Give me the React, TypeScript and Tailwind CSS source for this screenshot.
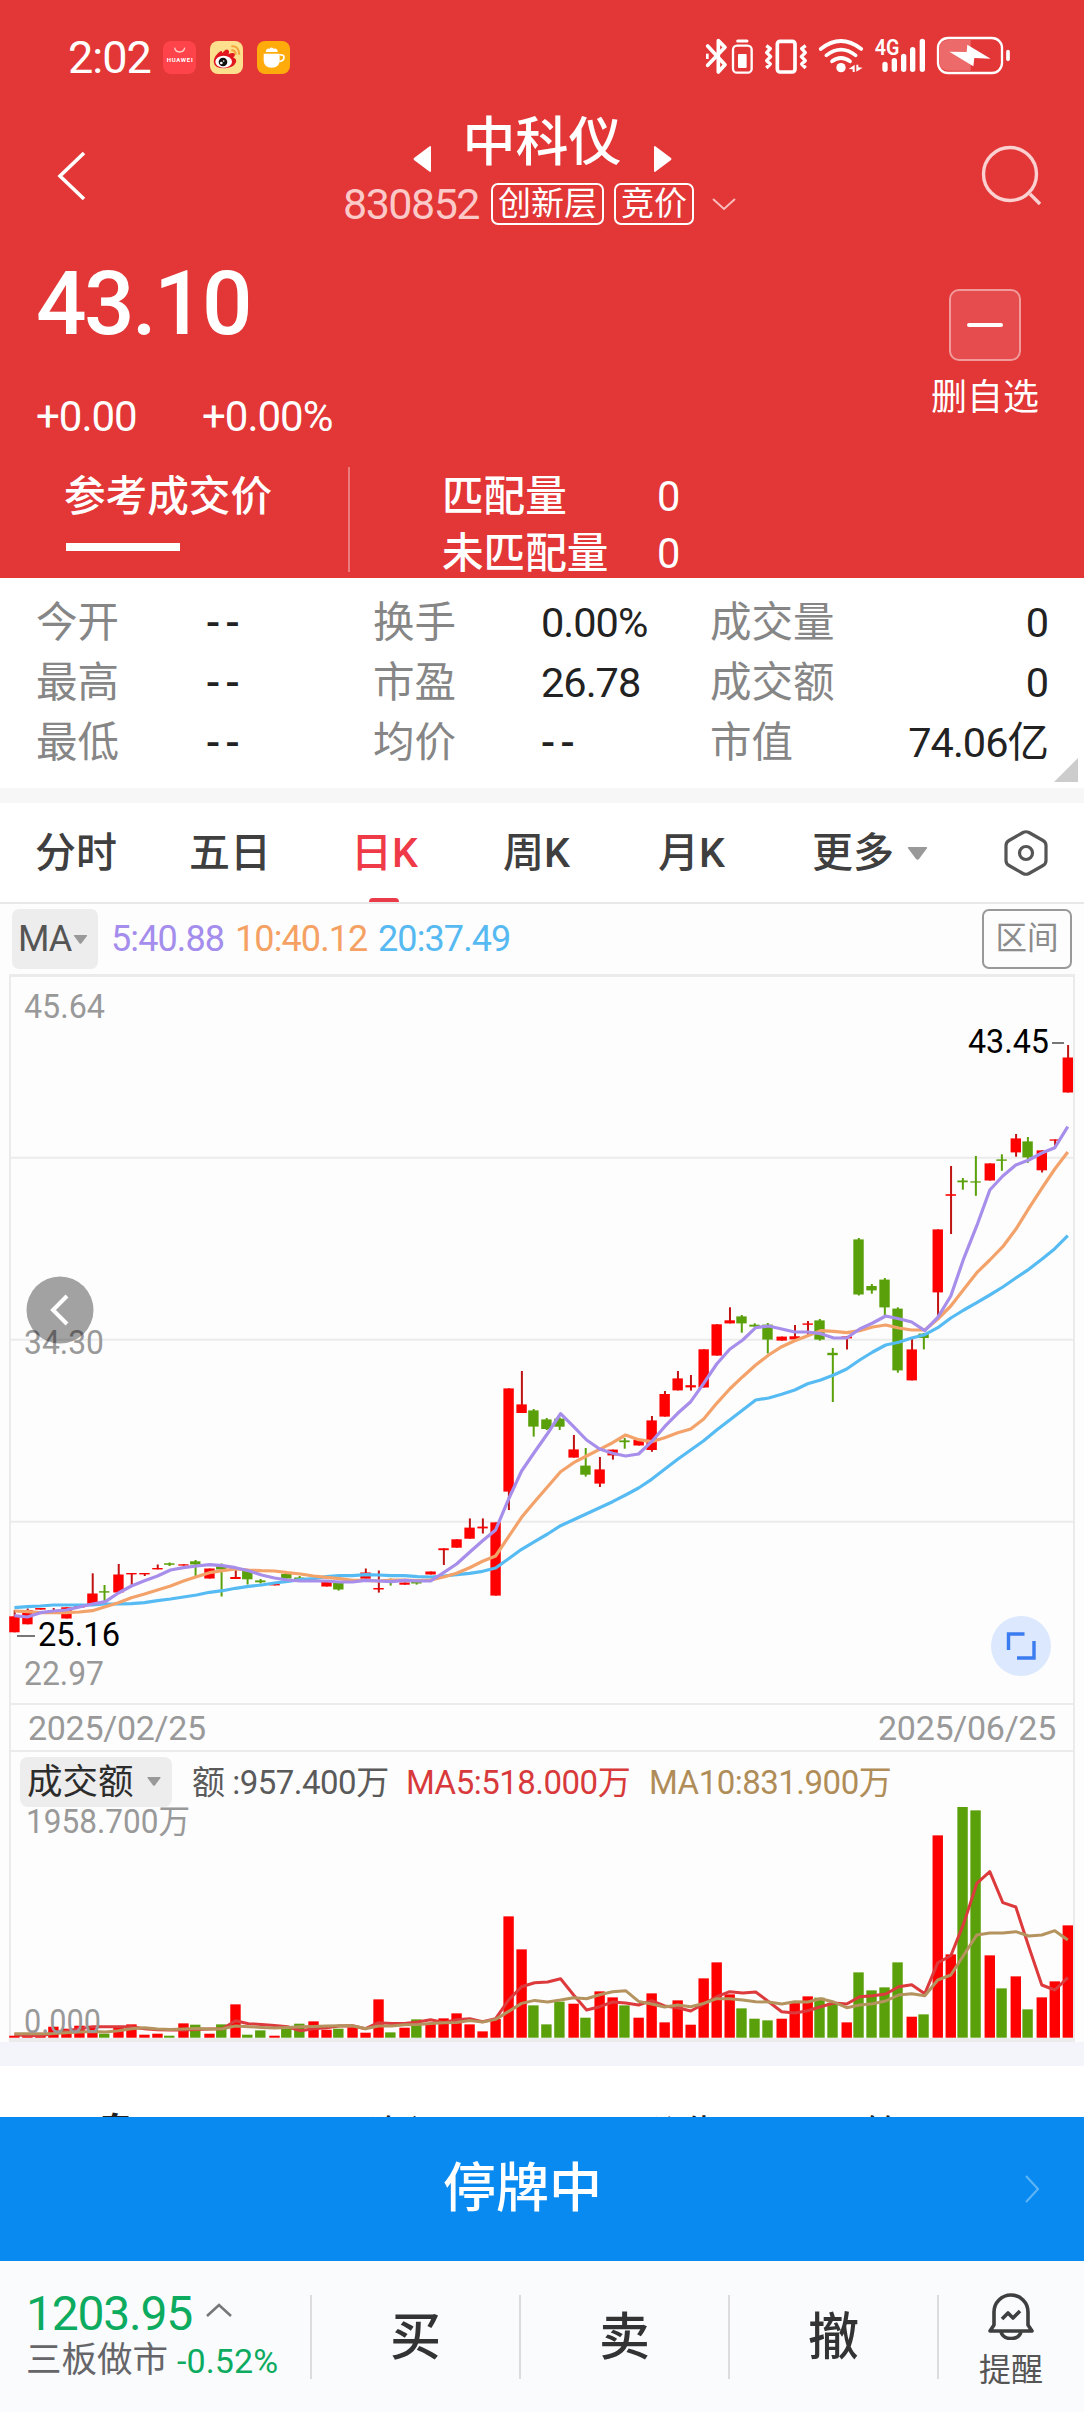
import type { ReactNode } from 'react'

type Candle = [color: 'r' | 'g', top: number, bottom: number, high?: number, low?: number]

const STEP = 13.005
const FIRST_X = 14.4
const BASE_Y = 2037.7

const RED = '#fe0000'
const GREEN = '#5aa00a'

// body top, body bottom, wick high, wick low
const candles: Candle[] = [
  ['r', 1616.3, 1632.3, 1610], ['r', 1610, 1624.3, 1608.5], ['r', 1608, 1609.6], ['r', 1610, 1611.5, 1608],
  ['r', 1607.3, 1618.5], ['r', 1606, 1607.5], ['r', 1593.5, 1604, 1573.3], ['g', 1591.2, 1592.6, 1585, 1601],
  ['r', 1574.5, 1592.5, 1564], ['r', 1573, 1574.4, 1573, 1586], ['r', 1573, 1574.4, 1573, 1576],
  ['r', 1568, 1569.4, 1564.5], ['g', 1563.3, 1564.8, 1562.5, 1566], ['r', 1564.3, 1565.6],
  ['g', 1561.3, 1564.5, 1560, 1576], ['r', 1568.5, 1578.5], ['g', 1565.5, 1569.5, 1563.5, 1596.5],
  ['r', 1577, 1579, 1570], ['g', 1570.5, 1579.3, 1570, 1584.5], ['g', 1580.4, 1582.3, 1579, 1583.5],
  ['r', 1583.3, 1585.4], ['g', 1574, 1578.5], ['g', 1577.5, 1579, 1576], ['r', 1580, 1581.6],
  ['r', 1581.5, 1586.5], ['g', 1582, 1589.5, 1581, 1590.6], ['r', 1581, 1582.5], ['r', 1572.5, 1578.7, 1568.5],
  ['r', 1588, 1589.5, 1570.5, 1592.6], ['g', 1581.3, 1582.7, 1578.5, 1585.6], ['r', 1582.5, 1584.7],
  ['g', 1582, 1583.5, 1581, 1584.6], ['r', 1571.5, 1574.5], ['r', 1548.3, 1550.2, 1548.3, 1565],
  ['r', 1539.3, 1547.7], ['r', 1527.6, 1538.7, 1518.4], ['r', 1526.6, 1528.4, 1518.4, 1533.5],
  ['r', 1522.4, 1595.6], ['r', 1388.4, 1491.6, 1388.4, 1510], ['r', 1404.4, 1413, 1371],
  ['g', 1410.4, 1426.6, 1409, 1436.6], ['g', 1419.4, 1429, 1418, 1430], ['g', 1418.6, 1426.7, 1417.5, 1430],
  ['r', 1449.4, 1457.6, 1435], ['g', 1465.6, 1474.7, 1448, 1476.6], ['r', 1469.4, 1483.6, 1457, 1487],
  ['r', 1449.6, 1455.4, 1449.6, 1459.6], ['g', 1440.4, 1442.2, 1438, 1448.7], ['r', 1439.6, 1445.5],
  ['r', 1420.4, 1450, 1416, 1451.8], ['r', 1394, 1416.6, 1391], ['r', 1378.4, 1390.4, 1371],
  ['r', 1385.2, 1387.4, 1375, 1390.6], ['r', 1349.3, 1387.5], ['r', 1324.3, 1355.6], ['r', 1320.3, 1323.4, 1307.3],
  ['g', 1316.4, 1323.4, 1315, 1332.7], ['g', 1324.7, 1326.6, 1323.3, 1327.5], ['g', 1324.6, 1339.6, 1323, 1353.5],
  ['r', 1336.6, 1340.6], ['r', 1336.3, 1339.4, 1325], ['r', 1323.4, 1324.8, 1321, 1335],
  ['g', 1320.4, 1339.6, 1319, 1340.7], ['g', 1352.8, 1355.2, 1348, 1402], ['r', 1336.4, 1338.4, 1336, 1349.5],
  ['g', 1239.4, 1294.5, 1238, 1295.5], ['g', 1286, 1290.4, 1284, 1293.7], ['g', 1279.6, 1307.4, 1278, 1315],
  ['g', 1308.6, 1370.4, 1307.3, 1372.7], ['r', 1349.4, 1380.4, 1338.7], ['g', 1333.6, 1338, 1333, 1349.4],
  ['r', 1229.4, 1292.4, 1229.4, 1318], ['r', 1194.2, 1195.8, 1166, 1234], ['g', 1180.5, 1182.3, 1178, 1189.7],
  ['g', 1181.3, 1182.6, 1156, 1195.8], ['r', 1163.4, 1180.5], ['g', 1159.4, 1160.8, 1154.3, 1170.8],
  ['r', 1138.4, 1152.4, 1134, 1156.7], ['g', 1141.4, 1157.4, 1137, 1162.8], ['r', 1150.4, 1170.3, 1150.4, 1172.5],
  ['r', 1139.4, 1140.7, 1139.4, 1146], ['r', 1057.5, 1092.5, 1045],
]

const ma5 = [
  1615.7, 1617, 1612.7, 1611, 1610, 1607, 1604, 1601.7, 1593, 1586, 1580.7, 1576, 1570, 1567.7, 1566, 1564.7, 1565.7,
  1567.7, 1570.7, 1575, 1578, 1580, 1581, 1581, 1581, 1582, 1582, 1580.3, 1581, 1581.7, 1580.3, 1581, 1581, 1572.7,
  1564, 1552.3, 1540.7, 1530, 1499, 1471, 1452, 1433.5, 1413.7, 1426.7, 1440, 1449, 1453.3, 1456, 1454, 1441.7,
  1426.7, 1413.3, 1401.7, 1383.3, 1364, 1349.3, 1340, 1327.7, 1326, 1329, 1332, 1332, 1333.7, 1338, 1338, 1329, 1323,
  1316, 1318.7, 1322, 1330.7, 1317.3, 1296, 1258.3, 1225.7, 1190, 1176, 1165, 1160, 1153, 1147.7, 1126.7,
]
const ma10 = [
  1611, 1611.7, 1612.7, 1612.7, 1612.7, 1612, 1610.7, 1606.7, 1602.7, 1597.7, 1594, 1590, 1586, 1581, 1576.7, 1572.7,
  1570.7, 1569, 1570, 1570.7, 1571, 1572.7, 1574, 1576, 1577.3, 1578.7, 1580.3, 1580.3, 1581, 1580, 1580, 1580.7, 1580,
  1577, 1573.3, 1567.7, 1561.3, 1556, 1536.7, 1517.3, 1501.7, 1486.7, 1471.7, 1462.7, 1456, 1449.3, 1442.7, 1435,
  1439.7, 1441.7, 1437.7, 1432.7, 1429, 1419, 1403.3, 1389, 1376.7, 1365, 1355, 1346.7, 1340.7, 1335.7, 1330.7, 1331.3,
  1332.7, 1330.7, 1327, 1325, 1328, 1330, 1330, 1319, 1306, 1289.3, 1272.7, 1260, 1246.7, 1229.3, 1208.3, 1188.3, 1169,
  1152,
]
const ma20 = [
  1607.7, 1606.7, 1606, 1605, 1605, 1605, 1605, 1604, 1604, 1603.7, 1602.7, 1600.7, 1599, 1597, 1595, 1592.3, 1590.7,
  1588.3, 1586.3, 1585, 1583, 1581.3, 1579.7, 1578.7, 1576.7, 1575.7, 1575.7, 1574.7, 1575, 1575.7, 1575.7, 1576.7,
  1577, 1576, 1574.7, 1573.3, 1571.3, 1568, 1558.7, 1549.3, 1541.7, 1534, 1525.7, 1519.7, 1513.7, 1507.7, 1501.7, 1495,
  1488, 1479.3, 1469.3, 1459.3, 1450, 1440.7, 1430, 1420, 1410, 1400, 1398, 1394.3, 1390, 1383.7, 1380, 1375, 1369,
  1360, 1352, 1345, 1342.3, 1338, 1334.7, 1327.7, 1318, 1310, 1302.7, 1295, 1287, 1278, 1269.3, 1259.3, 1248.7, 1235.7,
]

// turnover bar heights and moving averages, in thirds of a pixel above the base line
const volumes = [
  6, 6, 6, 33, 27, 36, 31, 12, 30, 40, 9, 12, 6, 43, 39, 12, 40, 100, 9, 22, 6, 30, 42, 49, 24, 27, 31, 15, 115, 16,
  30, 55, 43, 58, 73, 40, 19, 56, 364, 265, 97, 40, 108, 102, 60, 139, 121, 97, 60, 133, 46, 112, 39, 178, 226, 130,
  88, 57, 52, 57, 106, 124, 120, 105, 46, 196, 142, 151, 226, 63, 70, 607, 250, 694, 682, 247, 148, 184, 85, 121, 169,
  337,
]
const volMa5 = [
  9, 7, 6, 13, 20, 27, 33, 33, 33, 33, 27, 24, 23, 23, 25, 26, 27, 51, 42, 40, 37, 33, 21, 27, 30, 35, 36, 27, 45, 43,
  43, 47, 54, 46, 54, 57, 48, 57, 113, 153, 165, 167, 177, 128, 83, 93, 107, 104, 98, 111, 95, 90, 80, 101, 123, 138,
  134, 137, 108, 78, 74, 81, 93, 104, 101, 123, 126, 131, 153, 159, 132, 225, 246, 343, 463, 498, 405, 392, 273, 158,
  143, 180,
]
const volMa10 = [
  12, 12, 12, 13, 15, 17, 19, 17, 21, 27, 30, 26, 25, 26, 28, 26, 27, 35, 33, 31, 29, 31, 33, 34, 35, 36, 36, 27, 35,
  35, 39, 40, 43, 45, 46, 52, 47, 55, 79, 103, 112, 107, 113, 120, 117, 129, 138, 141, 109, 101, 92, 98, 93, 103, 117,
  117, 113, 108, 107, 101, 108, 107, 117, 107, 90, 98, 102, 110, 128, 132, 126, 173, 188, 248, 308, 314, 314, 318, 305,
  308, 321, 293,
]

const stats = [
  ['今开', '--', '换手', '0.00%', '成交量', '0'],
  ['最高', '--', '市盈', '26.78', '成交额', '0'],
  ['最低', '--', '均价', '--', '市值', '74.06亿'],
]

const xAt = (i: number) => FIRST_X + i * STEP
const toPoints = (ys: number[]) => ys.map((y, i) => `${xAt(i).toFixed(1)},${y.toFixed(1)}`).join(' ')
const volPoints = (vs: number[]) => toPoints(vs.map((v) => BASE_Y - v / 3))
// green bars sit one pixel further left than red ones
const barX = (i: number) => xAt(i) - (candles[i][0] === 'g' ? 6.4 : 5.2)

function Caret({ className }: { className: string }) {
  return (
    <svg viewBox="0 0 20 13" className={className} fill="#999">
      <path d="M1.5 0h17q2 0 .8 1.6L11.5 12q-1.5 1.6-3 0L.7 1.6Q-.5 0 1.5 0z" />
    </svg>
  )
}

function StatusBar() {
  return (
    <div className="flex h-[92px] items-start justify-between pr-[69px] pl-[68px] pt-[29px]">
      <div className="flex h-14 items-center">
        <span className="w-[95px] text-[45px] leading-none tracking-[-1px]">2:02</span>
        <svg viewBox="0 0 99 99" className="h-[33px] w-[33px]">
          <rect width="99" height="99" rx="24" fill="#ff434b" />
          <path d="M35 20q2 13 15 13t15-13" fill="none" stroke="#ffd0cc" strokeWidth="4" />
          <text x="11" y="64" fontSize="18" fontWeight="700" fill="#fff" textLength="78">HUAWEI</text>
        </svg>
        <svg viewBox="0 0 99 99" className="ml-[14px] h-[33px] w-[33px]">
          <rect width="99" height="99" rx="24" fill="#fde08d" />
          <path d="M11 62q2-19 20-31 6-3 6 5 15-18 20-5 1 6-2 8 18-7 20 1 0 7-6 9 12 5 9 15-7 16-32 18-33 1-35-20z" fill="#e1161e" />
          <ellipse cx="41" cy="62" rx="25" ry="18" fill="#fff" />
          <circle cx="39" cy="63" r="13" fill="#111" />
          <circle cx="34" cy="66" r="4" fill="#fff" />
          <circle cx="41" cy="60" r="2.5" fill="#fff" />
          <path d="M64 16q23-2 24 25M64 28q13-1 13 13" fill="none" stroke="#f4a13c" strokeWidth="6" />
        </svg>
        <svg viewBox="0 0 99 99" className="ml-[14px] h-[33px] w-[33px]">
          <rect width="99" height="99" rx="24" fill="#ffab0c" />
          <path d="M20 38h48v22q-2 20-24 20T20 60z" fill="#fff" />
          <path d="M26 33q2-12 12-10 4-7 12 0 12-2 12 10z" fill="#fff" />
          <path d="M68 42q13-2 13 7 0 11-14 13" fill="none" stroke="#fff" strokeWidth="5" />
        </svg>
      </div>
      <svg viewBox="0 0 960 168" className="mt-px h-14 w-[320px]" fill="none" stroke="#fff">
        <path d="M38 48l52 56-20 22V32l20 20-52 54" strokeWidth="11" strokeLinejoin="round" strokeLinecap="round" />
        <path d="M37 71v16" strokeWidth="8" />
        <path d="M128 33h28" strokeWidth="9" strokeLinecap="round" />
        <rect x="114" y="47" width="56" height="81" rx="12" strokeWidth="7" />
        <rect x="129" y="72" width="26" height="42" rx="3" fill="#fff" stroke="none" />
        <rect x="247" y="34" width="53" height="92" rx="8" strokeWidth="11" />
        <path d="M214 47l12 9-11 12 12 12-12 12 11 10-12 12M332 47l-12 9 11 12-12 12 12 12-11 10 12 12" strokeWidth="10" strokeLinejoin="round" />
        <path d="M377 57q60-48 122 0M394 76q44-34 88 0M411 94q27-20 54 0" strokeWidth="11" strokeLinecap="round" />
        <circle cx="438" cy="113" r="14" fill="#fff" stroke="none" />
        <path d="M479 104v22h-6v-8l-12-1zM484 104h6v8l13 1-19 12z" fill="#fff" stroke="none" />
        <text x="539" y="76" fontSize="66" fontWeight="600" fill="#fff" stroke="none" textLength="74" lengthAdjust="spacingAndGlyphs">4G</text>
        <path d="M570 103v15M598 92v26M626 79v39M653 59v59M682 34v84" strokeWidth="16" strokeLinecap="round" />
        <path d="M760 30h67v92h-67q-26 0-26-26V56q0-26 26-26z" fill="#ec6a6a" stroke="none" />
        <rect x="729" y="24" width="192" height="105" rx="30" strokeWidth="7" />
        <path d="M763 65l52 1 2-22 70 42-49-2-3 25z" fill="#fff" stroke="none" />
        <path d="M939 65v23" strokeWidth="11" strokeLinecap="round" />
      </svg>
    </div>
  )
}

function Tag({ children }: { children: ReactNode }) {
  return (
    <span className="flex h-[42px] shrink-0 items-center rounded-[7px] border-2 border-white px-[5px] text-[33px] leading-[38px] whitespace-nowrap">
      {children}
    </span>
  )
}

function Header() {
  return (
    <header className="flex h-[578px] shrink-0 flex-col bg-[#e23637] text-white">
      <StatusBar />
      <div className="flex h-[158px]">
        <div className="w-[343px] pt-[59px] pl-[56px]">
          <svg viewBox="0 0 32 50" className="h-[50px] w-8" fill="none" stroke="#fff" strokeWidth="3.6">
            <path d="M28 2L4 25l24 23" />
          </svg>
        </div>
        <div className="flex w-[393px] flex-col pt-[20px]">
          <div className="flex h-[58px] justify-center pl-[5px]">
            <svg viewBox="0 0 18 26" className="mt-[34px] h-[26px] w-[18px] shrink-0" fill="#fff">
              <path d="M17 0a1 1 0 0 1 1 1v24a1 1 0 0 1-1 1L1 14q-1-1 0-2z" />
            </svg>
            <h1 className="mx-[32px] text-[53px] leading-[63px] font-medium whitespace-nowrap">中科仪</h1>
            <svg viewBox="0 0 18 26" className="mt-[34px] h-[26px] w-[18px] shrink-0" fill="#fff">
              <path d="M1 0a1 1 0 0 0-1 1v24a1 1 0 0 0 1 1l16-12q1-1 0-2z" />
            </svg>
          </div>
          <div className="mt-[12px] flex items-center">
            <span className="w-[148px] shrink-0 text-[43px] leading-[44px] tracking-[-1.5px] text-[#fcc9c9]">830852</span>
            <Tag>创新层</Tag>
            <span className="w-3" />
            <Tag>竞价</Tag>
            <svg viewBox="0 0 24 14" className="ml-[18px] h-[14px] w-6 shrink-0" fill="none" stroke="#f9bcbc" strokeWidth="2">
              <path d="M1 2l11 10L23 2" />
            </svg>
          </div>
        </div>
        <div className="pt-[53px] pl-[245px]">
          <svg viewBox="0 0 60 62" className="h-[62px] w-[60px]" fill="none" stroke="#fbd0d0" strokeWidth="3.4">
            <circle cx="29" cy="29" r="26.5" />
            <path d="M49 49l10 10" />
          </svg>
        </div>
      </div>
      <div className="flex h-[196px] justify-between pr-[45px] pl-[36px]">
        <div>
          <div className="text-[89px] leading-[108px] font-medium tracking-[-2.6px]">43.10</div>
          <div className="mt-[29px] flex text-[42px] leading-[60px] tracking-[-1px]">
            <span className="w-[166px]">+0.00</span>
            <span>+0.00%</span>
          </div>
        </div>
        <div className="flex w-[108px] flex-col items-center pt-[39px]">
          <div className="flex h-[72px] w-[72px] items-center justify-center rounded-[10px] border-2 border-[#f09a9a] bg-[#e64c4d]">
            <span className="h-1 w-9 rounded-full bg-white" />
          </div>
          <span className="mt-[18px] text-[36px] leading-[38px] whitespace-nowrap">删自选</span>
        </div>
      </div>
      <div className="flex pt-[21px] text-[41.6px]">
        <div className="w-[348px] pl-[64px]">
          <div className="leading-[60px] font-medium">参考成交价</div>
          <div className="mt-[16px] ml-[2px] h-2 w-[114px] bg-white" />
        </div>
        <div className="h-[105px] w-0.5 bg-[#ec7c7c]" />
        <div className="grid h-[111px] grid-cols-[215px_auto] pt-px pl-[92px] leading-[57px]">
          <span className="font-medium">匹配量</span>
          <span>0</span>
          <span className="font-medium">未匹配量</span>
          <span>0</span>
        </div>
      </div>
    </header>
  )
}

function Value({ children, className = '' }: { children: string; className?: string }) {
  return (
    <span className={`text-[#222] ${children === '--' ? 'font-medium tracking-[5.5px]' : 'tracking-[-1px]'} ${className}`}>
      {children}
    </span>
  )
}

function Stats() {
  return (
    <section className="h-[210px] shrink-0 pt-[15px]">
      {stats.map((row) => (
        <div key={row[0]} className="flex pr-[36px] pl-[36px] text-[41.5px] leading-[60px] text-[#868686]">
          <span className="w-[170px]">{row[0]}</span>
          <Value className="w-[167px]">{row[1]}</Value>
          <span className="w-[168px]">{row[2]}</span>
          <Value className="w-[169px]">{row[3]}</Value>
          <span>{row[4]}</span>
          <Value className="ml-auto">{row[5]}</Value>
        </div>
      ))}
      <svg viewBox="0 0 24 24" className="mt-[-15px] ml-[1054px] h-6 w-6" fill="#ccc">
        <path d="M24 0v24H0z" />
      </svg>
    </section>
  )
}

function Tabs() {
  return (
    <nav className="flex h-[101px] shrink-0 items-start border-b-2 border-[#e8e8e8] pl-[35px] text-[41px] leading-[101px] font-medium text-[#3f3f3f]">
      <span className="w-[154px]">分时</span>
      <span className="w-[162px]">五日</span>
      <span className="flex h-[99px] w-[152px] flex-col text-[#ef3b47]">
        日K
        <span className="mt-[-6px] ml-[18px] h-1 w-[30px] rounded-t-sm bg-[#e93b48]" />
      </span>
      <span className="w-[155px]">周K</span>
      <span className="w-[154px]">月K</span>
      <span>更多</span>
      <Caret className="mt-[44px] ml-[13px] h-[13px] w-[21px]" />
      <svg viewBox="0 0 44 46" className="mt-[27px] ml-[76px] h-[46px] w-11" fill="none" stroke="#555" strokeWidth="3.2">
        <path d="M19 2.5q3-1.5 6 0l14 8q3 1.7 3 5v15q0 3.3-3 5l-14 8q-3 1.5-6 0l-14-8q-3-1.7-3-5v-15q0-3.3 3-5z" />
        <circle cx="22" cy="23" r="6.5" />
      </svg>
    </nav>
  )
}

function MaRow() {
  return (
    <div className="flex h-[70px] shrink-0 items-center pr-[12px] pl-[12px] text-[36px] leading-[60px] tracking-[-0.9px]">
      <div className="flex h-[60px] w-[86px] items-center rounded-[7px] bg-[#ededed] pl-[6px] text-[#555]">
        MA
        <Caret className="ml-[2px] h-[9px] w-[15px]" />
      </div>
      <span className="ml-[13px] w-[124px] text-[#a48dec]">5:40.88</span>
      <span className="w-[143px] text-[#f5a163]">10:40.12</span>
      <span className="text-[#56b9f2]">20:37.49</span>
      <div className="ml-auto flex h-[60px] w-[90px] items-center justify-center rounded-[7px] border-2 border-[#999] text-[31.5px] tracking-normal text-[#8c8c8c]">
        区间
      </div>
    </div>
  )
}

function PriceChart() {
  return (
    <svg viewBox="0 974 1084 729" className="h-[729px] w-full shrink-0" fontSize="33">
      <g stroke="#ebebeb" strokeWidth="2">
        <path d="M9 975.5h1066" strokeWidth="3" />
        <path d="M10 1157.7h1064M10 1339.7h1064M10 1521.7h1064M10 974v729M1074 974v729" />
      </g>
      <g fill="#999">
        <text x="24" y="1018" textLength="81" lengthAdjust="spacingAndGlyphs">45.64</text>
        <text x="24" y="1354" textLength="80" lengthAdjust="spacingAndGlyphs">34.30</text>
        <text x="24" y="1685" textLength="80" lengthAdjust="spacingAndGlyphs">22.97</text>
      </g>
      {candles.map(([color, top, bottom, high = top, low = bottom], i) => (
        <g key={i} fill={color === 'r' ? RED : GREEN}>
          <rect x={barX(i) + 4.5} y={high} width="2" height={low - high} fill={color === 'r' ? '#c01414' : GREEN} />
          <rect x={barX(i)} y={top} width="10.4" height={bottom - top} />
        </g>
      ))}
      <g fill="none" strokeWidth="3.2" strokeLinejoin="round">
        <polyline points={toPoints(ma20)} stroke="#56bbf2" />
        <polyline points={toPoints(ma10)} stroke="#f3a26a" />
        <polyline points={toPoints(ma5)} stroke="#a68eea" />
      </g>
      <path d="M17 1636h18M1052 1043h12" stroke="#777" strokeWidth="2" />
      <text x="38" y="1646" textLength="82" lengthAdjust="spacingAndGlyphs">25.16</text>
      <text x="968" y="1053" textLength="81" lengthAdjust="spacingAndGlyphs">43.45</text>
      <circle cx="60" cy="1310" r="33.5" fill="#000" fillOpacity=".36" />
      <path d="M67 1296l-14 14 14 14" fill="none" stroke="#fff" strokeWidth="4" />
      <circle cx="1021" cy="1646" r="30" fill="#dce8fd" />
      <path d="M1008.500 1650v-16h16M1034 1641v17h-17" fill="none" stroke="#3b7cf0" strokeWidth="3.4" />
    </svg>
  )
}

function TurnoverChart() {
  return (
    <svg viewBox="0 1807 1084 235" className="h-[235px] w-full shrink-0" fontSize="33">
      <path d="M9 2040h1066" stroke="#ebebeb" strokeWidth="4" />
      <path d="M10 1807v233M1074 1807v233" stroke="#ebebeb" strokeWidth="2" />
      {volumes.map((v, i) => (
        <rect
          key={i}
          x={barX(i)}
          y={BASE_Y - v / 3}
          width="10.4"
          height={v / 3}
          fill={candles[i][0] === 'r' ? RED : GREEN}
        />
      ))}
      <g fill="none" strokeWidth="3" strokeLinejoin="round">
        <polyline points={volPoints(volMa5)} stroke="#dc3a3c" />
        <polyline points={volPoints(volMa10)} stroke="#b4935e" />
      </g>
      <g fill="#999">
        <text x="26" y="1833" textLength="164" lengthAdjust="spacingAndGlyphs">1958.700万</text>
        <text x="24" y="2033" textLength="77" lengthAdjust="spacingAndGlyphs">0.000</text>
      </g>
    </svg>
  )
}

function Charts() {
  return (
    <section className="flex shrink-0 flex-col bg-[#fdfdfd]">
      <MaRow />
      <PriceChart />
      <div className="mx-[9px] flex h-[49px] items-center justify-between border-2 border-[#ebebeb] px-[17px] text-[34px] leading-[46px] tracking-[-0.3px] text-[#999]">
        <span>2025/02/25</span>
        <span>2025/06/25</span>
      </div>
      <div className="mx-[9px] flex h-[55px] items-center border-x-2 border-[#ebebeb] pl-[9px] text-[33px] leading-[50px] tracking-[-0.5px]">
        <div className="mt-1 flex h-[50px] w-[152px] items-center rounded-lg bg-[#ededed] pl-[7px] text-[35.5px] tracking-normal text-[#2c2c2c]">
          成交额
          <Caret className="ml-[13px] h-[9px] w-[14px]" />
        </div>
        <span className="mt-[6px] ml-[20px] w-[214px] whitespace-pre text-[#5a5a5a]">额 :957.400万</span>
        <span className="mt-[6px] w-[243px] text-[#d83a3c]">MA5:518.000万</span>
        <span className="mt-[6px] text-[#b08d58]">MA10:831.900万</span>
      </div>
      <TurnoverChart />
    </section>
  )
}

function BottomBar() {
  return (
    <footer className="flex h-[151px] shrink-0 bg-[#fafbfd]">
      <div className="w-[310px] pt-[27px] pl-[26px]">
        <div className="flex items-start">
          <span className="w-[180px] text-[48px] leading-[52px] tracking-[-1.2px] text-[#0cab5f]">1203.95</span>
          <svg viewBox="0 0 26 14" className="mt-[15px] h-[14px] w-[26px]" fill="none" stroke="#777" strokeWidth="2.6">
            <path d="M1 13L13 2l12 11" />
          </svg>
        </div>
        <div className="flex h-[40px] items-center leading-[40px]">
          <span className="w-[151px] text-[35.5px] text-[#66666a]">三板做市</span>
          <span className="mt-0.5 text-[34px] tracking-[0.1px] text-[#0cab5f]">-0.52%</span>
        </div>
      </div>
      {['买', '卖', '撤'].map((label) => (
        <div key={label} className="flex w-[209px] pt-[34px] text-[51px] leading-[86px] font-medium text-[#333]">
          <span className="h-[84px] w-0.5 bg-[#dcdcdf]" />
          <span className="flex-1 text-center">{label}</span>
        </div>
      ))}
      <div className="flex flex-1 pt-[34px]">
        <span className="h-[84px] w-0.5 bg-[#dcdcdf]" />
        <div className="flex w-[144px] flex-col items-center">
          <svg viewBox="0 0 46 48" className="mt-[-3px] h-12 w-[46px] shrink-0" fill="none" stroke="#3f3f3f" strokeWidth="3.6" strokeLinejoin="round">
            <path d="M2 39l4-6V20a17 17 0 0 1 34 0v13l4 6z" />
            <path d="M13 40q2 6.5 10 6.5T33 40" />
            <path d="M14 27l6-6 5 5 7-7" />
          </svg>
          <span className="mt-[12px] text-[32px] leading-[36px] text-[#555]">提醒</span>
        </div>
      </div>
    </footer>
  )
}

export default function App() {
  return (
    <div className="flex h-[2412px] w-[1084px] flex-col overflow-hidden bg-white font-[Roboto,'Noto_Sans_CJK_SC',sans-serif]">
      <Header />
      <Stats />
      <div className="h-[15px] shrink-0 bg-[#f7f7f7]" />
      <Tabs />
      <Charts />
      <div className="h-6 shrink-0 bg-[#f4f5fa]" />
      <div className="flex h-[51px] shrink-0 overflow-hidden pt-[49px] pl-[95px] text-[40px] leading-[42px] text-[#222]">
        <span className="mt-[-2px] w-[273px] font-bold">盘口</span>
        <span className="w-[275px]">资讯</span>
        <span className="w-[220px]">公告</span>
        <span>简况</span>
      </div>
      <button className="flex h-[144px] shrink-0 items-center bg-[#088af0] pl-[443px] text-[53px] leading-[60px] font-medium text-white">
        停牌中
        <svg viewBox="0 0 14 28" className="ml-[423px] h-7 w-[14px]" fill="none" stroke="#5fb4f6" strokeWidth="2">
          <path d="M1 1l12 13L1 27" />
        </svg>
      </button>
      <BottomBar />
    </div>
  )
}
